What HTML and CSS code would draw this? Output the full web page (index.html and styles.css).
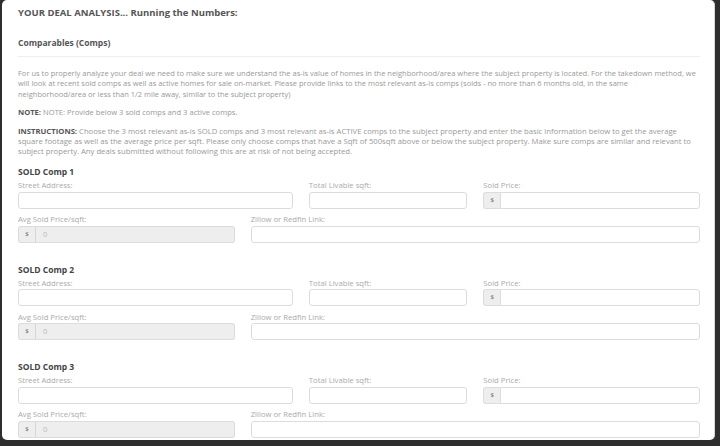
FILE: index.html
```html
<!DOCTYPE html>
<html lang="en">
<head>
<meta charset="utf-8">
<title>Deal Analysis</title>
<link rel="stylesheet" href="styles.css">
</head>
<body>
<div class="frame">
  <div class="card">
    <h2 class="title">YOUR DEAL ANALYSIS... Running the Numbers:</h2>
    <h3 class="sub">Comparables (Comps)</h3>
    <p class="text intro">For us to properly analyze your deal we need to make sure we understand the as-is value of homes in the neighborhood/area where the subject property is located. For the takedown method, we will look at recent sold comps as well as active homes for sale on-market. Please provide links to the most relevant as-is comps (solds - no more than 6 months old, in the same neighborhood/area or less than 1/2 mile away, similar to the subject property)</p>
    <p class="text"><strong>NOTE:</strong> NOTE: Provide below 3 sold comps and 3 active comps.</p>
    <p class="text last"><strong>INSTRUCTIONS:</strong> Choose the 3 most relevant as-is SOLD comps and 3 most relevant as-is ACTIVE comps to the subject property and enter the basic information below to get the average square footage as well as the average price per sqft. Please only choose comps that have a Sqft of 500sqft above or below the subject property. Make sure comps are similar and relevant to subject property. Any deals submitted without following this are at risk of not being accepted.</p>

    <section class="comp">
      <h4 class="comp-title">SOLD Comp 1</h4>
      <div class="fields">
        <div class="field span5"><label>Street Address:</label><div class="input"></div></div>
        <div class="field span3"><label>Total Livable sqft:</label><div class="input"></div></div>
        <div class="field span4"><label>Sold Price:</label><div class="group"><span class="addon">$</span><div class="input"></div></div></div>
        <div class="field span4"><label>Avg Sold Price/sqft:</label><div class="group disabled"><span class="addon">$</span><div class="input">0</div></div></div>
        <div class="field span8"><label>Zillow or Redfin Link:</label><div class="input"></div></div>
      </div>
    </section>

    <section class="comp">
      <h4 class="comp-title">SOLD Comp 2</h4>
      <div class="fields">
        <div class="field span5"><label>Street Address:</label><div class="input"></div></div>
        <div class="field span3"><label>Total Livable sqft:</label><div class="input"></div></div>
        <div class="field span4"><label>Sold Price:</label><div class="group"><span class="addon">$</span><div class="input"></div></div></div>
        <div class="field span4"><label>Avg Sold Price/sqft:</label><div class="group disabled"><span class="addon">$</span><div class="input">0</div></div></div>
        <div class="field span8"><label>Zillow or Redfin Link:</label><div class="input"></div></div>
      </div>
    </section>

    <section class="comp">
      <h4 class="comp-title">SOLD Comp 3</h4>
      <div class="fields">
        <div class="field span5"><label>Street Address:</label><div class="input"></div></div>
        <div class="field span3"><label>Total Livable sqft:</label><div class="input"></div></div>
        <div class="field span4"><label>Sold Price:</label><div class="group"><span class="addon">$</span><div class="input"></div></div></div>
        <div class="field span4"><label>Avg Sold Price/sqft:</label><div class="group disabled"><span class="addon">$</span><div class="input">0</div></div></div>
        <div class="field span8"><label>Zillow or Redfin Link:</label><div class="input"></div></div>
      </div>
    </section>
  </div>
</div>
</body>
</html>
```

FILE: styles.css
```css
html, body {
  margin: 0;
  padding: 0;
  height: 100%;
  overflow: hidden;
}
body {
  background: #2e2e2e;
  font-family: "Open Sans", "Liberation Sans", sans-serif;
}
.frame {
  padding-left: 2px;
  width: 713px;
}
.card {
  height: 440px;
  box-sizing: border-box;
  background: #fff;
  border-radius: 5px;
  border-right: 1px solid #d8d8d8;
  padding: 6px 14px 0 16px;
  overflow: hidden;
}
.title {
  margin: 0 0 17px;
  font-size: 9.5px;
  line-height: 13px;
  font-weight: 700;
  color: #555;
}
.sub {
  margin: 0 0 11px;
  padding-bottom: 7px;
  border-bottom: 1px solid #eee;
  font-size: 8.5px;
  line-height: 13px;
  font-weight: 700;
  color: #555;
}
.text {
  margin: 0 0 8px;
  font-size: 7.6px;
  line-height: 10.4px;
  color: #999;
}
.text.intro {
  font-size: 7.5px;
  max-width: 679px;
}
.text strong {
  color: #555;
  font-weight: 700;
}
.text.last {
  font-size: 7.7px;
  margin-bottom: 9.5px;
}
.comp {
  margin-bottom: 21px;
}
.comp-title {
  margin: 0 0 2px;
  font-size: 8.5px;
  line-height: 12px;
  font-weight: 700;
  color: #444;
}
.fields {
  display: grid;
  grid-template-columns: repeat(12, 1fr);
  column-gap: 16px;
  row-gap: 5.5px;
}
.span5 { grid-column: span 5; }
.span3 { grid-column: span 3; }
.span4 { grid-column: span 4; }
.span8 { grid-column: span 8; }
.field label {
  display: block;
  font-size: 7.7px;
  line-height: 11.5px;
  color: #aaa;
}
.input {
  height: 17px;
  box-sizing: border-box;
  border: 1px solid #dcdcdc;
  border-radius: 3px;
  background: #fff;
  font-size: 7.7px;
  line-height: 15px;
  padding-left: 7px;
  color: #bbb;
}
.group {
  display: flex;
}
.addon {
  width: 17px;
  height: 17px;
  box-sizing: border-box;
  flex: none;
  border: 1px solid #dcdcdc;
  border-right: none;
  border-radius: 3px 0 0 3px;
  background: #eee;
  font-size: 6px;
  font-weight: 700;
  line-height: 15px;
  text-align: center;
  color: #888;
}
.group .input {
  flex: 1;
  border-radius: 0 3px 3px 0;
}
.group.disabled .input {
  background: #eee;
  border-left-color: #d6d6d6;
}
```
